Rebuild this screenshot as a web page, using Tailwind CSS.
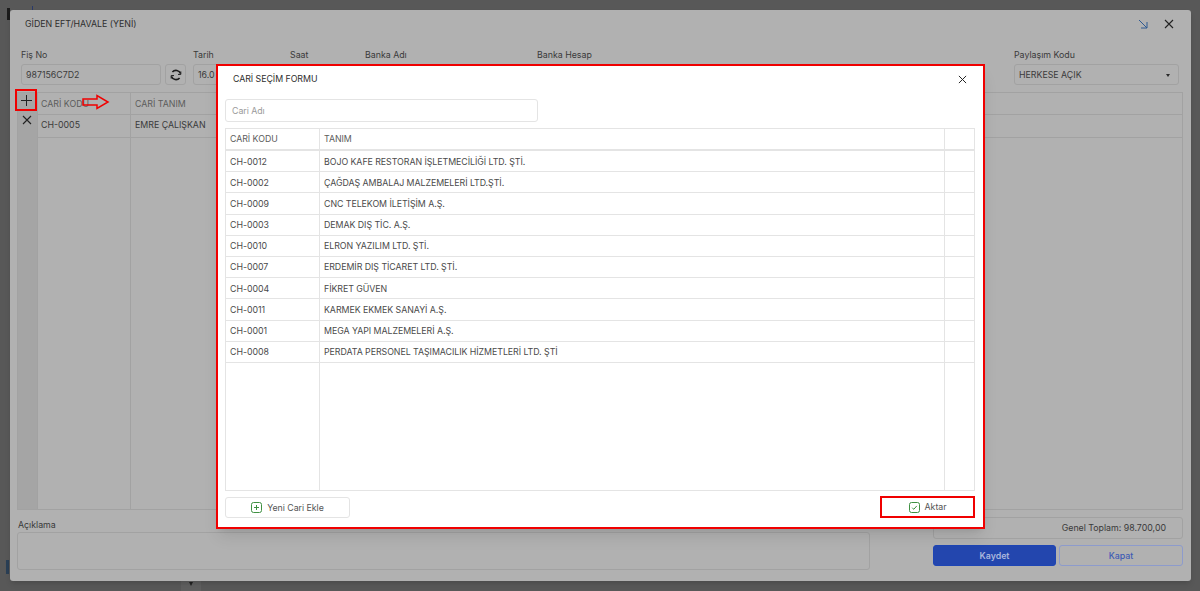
<!DOCTYPE html>
<html lang="tr">
<head>
    <meta charset="UTF-8">
    <title>Giden EFT/Havale</title>
    <script src="https://cdn.jsdelivr.net/npm/@tailwindcss/browser@4"></script>
</head>
<body class="bg-[#585858] font-['Inter',sans-serif] overflow-hidden">
    <div class="relative w-[1200px] h-[591px] p-[10px]">
        <!-- page behind the overlay -->
        <div class="absolute left-[7px] top-[8px] w-[3px] h-[12px] bg-[#1c1c1c]"></div>
        <div class="absolute left-[32px] top-[6px] w-[1px] h-[4px] bg-[#2a3a6a]"></div>
        <div class="absolute left-[6px] top-[560px] w-[3px] h-[14px] bg-[#2a3f55]"></div>
        <div class="absolute left-[181px] top-[581px] w-[20px] h-[10px] bg-[#5f5f5f] flex justify-center">
            <span class="mt-[1px] w-0 h-0 border-x-[2.5px] border-x-transparent border-t-[4px] border-t-[#222]"></span>
        </div>

        <!-- Giden EFT window -->
        <div class="relative w-[1181px] h-[571px] bg-[#b1b1b1] rounded-[3px] shadow-md flex flex-col text-[#3a3a3a]">
            <div class="flex items-center justify-between h-[28px] pl-[15px] pr-[17px]">
                <span class="text-[8.8px] text-[#2e2e2e]">GİDEN EFT/HAVALE (YENİ)</span>
                <div class="flex items-center gap-[16px]">
                    <svg class="w-[10px] h-[10px]" viewBox="0 0 10 10" fill="none" stroke="#2f5a92" stroke-width="1"><path d="M1 1l8 8M9 3v6H3"/></svg>
                    <svg class="w-[10px] h-[10px]" viewBox="0 0 10 10" fill="none" stroke="#222" stroke-width="1.1"><path d="M1 1l8 8M9 1l-8 8"/></svg>
                </div>
            </div>

            <!-- form row -->
            <div class="flex pl-[11px] mt-[10px] text-[8.8px]">
                <div class="w-[140px]">
                    <div class="h-[16px] text-[#3c3c3c]">Fiş No</div>
                    <div class="h-[21px] border border-[#a2a2a2] rounded-[3px] flex items-center pl-[4px] pt-[1px] text-[#3c3c3c]">987156C7D2</div>
                </div>
                <div class="ml-[4px] w-[21px] mt-[16px] h-[21px] border border-[#a2a2a2] rounded-[3px] flex items-center justify-center">
                    <svg class="w-[12px] h-[12px]" viewBox="0 0 12 12" fill="none" stroke="#1c1c1c" stroke-width="1.6"><path d="M10.500 4.500A4.800 4.800 0 0 0 2.400 3M1.500 7.500A4.800 4.800 0 0 0 9.600 9"/><path d="M10.800 2.400v3H8M1.200 9.600v-3H4" stroke-width="1"/></svg>
                </div>
                <div class="ml-[7px] w-[97px]">
                    <div class="h-[16px]">Tarih</div>
                    <div class="h-[21px] border border-[#a2a2a2] rounded-[3px] flex items-center pl-[4px] pt-[1px]">16.0</div>
                </div>
                <div class="w-[75px]"><div class="h-[16px]">Saat</div></div>
                <div class="w-[172px]"><div class="h-[16px]">Banka Adı</div></div>
                <div class="w-[477px]"><div class="h-[16px]">Banka Hesap</div></div>
                <div class="w-[165px]">
                    <div class="h-[16px]">Paylaşım Kodu</div>
                    <div class="h-[21px] border border-[#a2a2a2] rounded-[3px] flex items-center justify-between pl-[4px] pr-[8px] pt-[1px]">
                        HERKESE AÇIK
                        <span class="w-0 h-0 border-x-[2.5px] border-x-transparent border-t-[3px] border-t-[#2a2a2a]"></span>
                    </div>
                </div>
            </div>

            <!-- grid -->
            <div class="ml-[7px] mt-[7px] w-[1166px] h-[418px] border border-[#a2a2a2] flex text-[8.8px]">
                <div class="w-[19px] bg-[#a5a5a5] flex flex-col items-center pr-[1px]">
                    <div class="h-[21px]"></div>
                    <svg class="mt-[1px] w-[10px] h-[10px]" viewBox="0 0 10 10" fill="none" stroke="#222" stroke-width="1.1"><path d="M1 1l8 8M9 1l-8 8"/></svg>
                </div>
                <div class="flex-1 flex flex-col">
                    <div class="flex h-[22px] border-b border-[#a2a2a2] text-[#5c5c5c]">
                        <div class="w-[94px] pl-[3px] flex items-center border-x border-[#a2a2a2]">CARİ KODU</div>
                        <div class="flex-1 pl-[4px] flex items-center">CARİ TANIM</div>
                    </div>
                    <div class="flex h-[23px] border-b border-[#a2a2a2]">
                        <div class="w-[94px] pl-[3px] pb-[2px] flex items-center border-x border-[#a2a2a2]">CH-0005</div>
                        <div class="flex-1 pl-[4px] pb-[2px] flex items-center">EMRE ÇALIŞKAN</div>
                    </div>
                    <div class="flex-1 flex">
                        <div class="w-[94px] border-x border-[#a2a2a2]"></div>
                    </div>
                </div>
            </div>

            <!-- footer -->
            <div class="flex px-[7px] mt-[7px] text-[8.8px]">
                <div class="w-[853px]">
                    <div class="h-[15px] flex items-center pl-[1px]">Açıklama</div>
                    <div class="h-[38px] border border-[#a2a2a2] rounded-[3px]"></div>
                </div>
                <div class="ml-[63px] w-[250px]">
                    <div class="h-[22px] border border-[#a2a2a2] rounded-[3px] flex items-center justify-end pr-[16px]">Genel Toplam: 98.700,00</div>
                    <div class="flex gap-[3px] mt-[6px] h-[21px] text-[#2d4fb0]">
                        <div class="w-[123px] rounded-[3px] bg-[#2346ae] border border-[#1d45b5] text-[#a9b6dc] font-semibold flex items-center justify-center">Kaydet</div>
                        <div class="w-[124px] rounded-[3px] border border-[#8d9bcc] font-medium text-[#3d5bb5] flex items-center justify-center">Kapat</div>
                    </div>
                </div>
            </div>

            <!-- annotations on the underlying window -->
            <div class="absolute left-[5px] top-[79px] w-[22px] h-[22px] border-2 border-[#f00000] flex items-center justify-center">
                <svg class="w-[11px] h-[11px]" viewBox="0 0 11 11" fill="none" stroke="#222" stroke-width="1"><path d="M5.500 0v11M0 5.500h11"/></svg>
            </div>
            <svg class="absolute left-[72px] top-[84px] w-[28px] h-[16px]" viewBox="0 0 28 16" fill="none" stroke="#f00000" stroke-width="1.500"><path d="M1 5h14V1.500L26 8 15 14.500V11H1z"/></svg>
        </div>

        <!-- Cari secim modal -->
        <div class="absolute left-[216px] top-[64px] w-[769px] h-[465px] bg-white border-2 border-[#f00000] flex flex-col px-[7px] text-[8.8px] tracking-[-0.04px] text-[#4a4a4a] shadow-lg">
            <div class="flex items-center justify-between h-[26px] pl-[8px] pr-[9px]">
                <span class="text-[#2e2e2e]">CARİ SEÇİM FORMU</span>
                <svg class="w-[9px] h-[9px]" viewBox="0 0 10 10" fill="none" stroke="#222" stroke-width="1.1"><path d="M1 1l8 8M9 1l-8 8"/></svg>
            </div>
            <div class="mt-[7px] w-[313px] h-[23px] border border-[#e4e4e4] rounded-[3px] flex items-center pl-[6px] text-[#9a9a9a]">Cari Adı</div>
            <div class="mt-[6px] w-[750px] h-[363px] border border-[#e4e4e4] flex flex-col">
                <div class="flex h-[22px] border-b-2 border-[#e4e4e4] text-[#5c5c5c] shrink-0">
                    <div class="w-[94px] pl-[4px] flex items-center border-r border-[#e4e4e4]">CARİ KODU</div>
                    <div class="w-[625px] pl-[4px] flex items-center border-r border-[#e4e4e4]">TANIM</div>
                </div>
                <div class="flex h-[21.2px] border-b border-[#e4e4e4]"><div class="w-[94px] pl-[4px] flex items-center border-r border-[#e4e4e4]">CH-0012</div><div class="w-[625px] pl-[4px] flex items-center border-r border-[#e4e4e4]">BOJO KAFE RESTORAN İŞLETMECİLİĞİ LTD. ŞTİ.</div></div>
                <div class="flex h-[21.2px] border-b border-[#e4e4e4]"><div class="w-[94px] pl-[4px] flex items-center border-r border-[#e4e4e4]">CH-0002</div><div class="w-[625px] pl-[4px] flex items-center border-r border-[#e4e4e4]">ÇAĞDAŞ AMBALAJ MALZEMELERİ LTD.ŞTİ.</div></div>
                <div class="flex h-[21.2px] border-b border-[#e4e4e4]"><div class="w-[94px] pl-[4px] flex items-center border-r border-[#e4e4e4]">CH-0009</div><div class="w-[625px] pl-[4px] flex items-center border-r border-[#e4e4e4]">CNC TELEKOM İLETİŞİM A.Ş.</div></div>
                <div class="flex h-[21.2px] border-b border-[#e4e4e4]"><div class="w-[94px] pl-[4px] flex items-center border-r border-[#e4e4e4]">CH-0003</div><div class="w-[625px] pl-[4px] flex items-center border-r border-[#e4e4e4]">DEMAK DIŞ TİC. A.Ş.</div></div>
                <div class="flex h-[21.2px] border-b border-[#e4e4e4]"><div class="w-[94px] pl-[4px] flex items-center border-r border-[#e4e4e4]">CH-0010</div><div class="w-[625px] pl-[4px] flex items-center border-r border-[#e4e4e4]">ELRON YAZILIM LTD. ŞTİ.</div></div>
                <div class="flex h-[21.2px] border-b border-[#e4e4e4]"><div class="w-[94px] pl-[4px] flex items-center border-r border-[#e4e4e4]">CH-0007</div><div class="w-[625px] pl-[4px] flex items-center border-r border-[#e4e4e4]">ERDEMİR DIŞ TİCARET LTD. ŞTİ.</div></div>
                <div class="flex h-[21.2px] border-b border-[#e4e4e4]"><div class="w-[94px] pl-[4px] flex items-center border-r border-[#e4e4e4]">CH-0004</div><div class="w-[625px] pl-[4px] flex items-center border-r border-[#e4e4e4]">FİKRET GÜVEN</div></div>
                <div class="flex h-[21.2px] border-b border-[#e4e4e4]"><div class="w-[94px] pl-[4px] flex items-center border-r border-[#e4e4e4]">CH-0011</div><div class="w-[625px] pl-[4px] flex items-center border-r border-[#e4e4e4]">KARMEK EKMEK SANAYİ A.Ş.</div></div>
                <div class="flex h-[21.2px] border-b border-[#e4e4e4]"><div class="w-[94px] pl-[4px] flex items-center border-r border-[#e4e4e4]">CH-0001</div><div class="w-[625px] pl-[4px] flex items-center border-r border-[#e4e4e4]">MEGA YAPI MALZEMELERİ A.Ş.</div></div>
                <div class="flex h-[21.2px] border-b border-[#e4e4e4]"><div class="w-[94px] pl-[4px] flex items-center border-r border-[#e4e4e4]">CH-0008</div><div class="w-[625px] pl-[4px] flex items-center border-r border-[#e4e4e4]">PERDATA PERSONEL TAŞIMACILIK HİZMETLERİ LTD. ŞTİ</div></div>
                <div class="flex flex-1"><div class="w-[94px] border-r border-[#e4e4e4]"></div><div class="w-[625px] border-r border-[#e4e4e4]"></div></div>
            </div>
            <div class="mt-[5px] w-[750px] flex justify-between items-start">
                <div class="mt-[1px] w-[125px] h-[21px] border border-[#e4e4e4] rounded-[3px] flex items-center justify-center gap-[5px] text-[#555]">
                    <svg class="w-[11px] h-[11px]" viewBox="0 0 11 11" fill="none" stroke="#3f9142"><rect x=".5" y=".5" width="10" height="10" rx="2"/><path d="M5.500 3v5M3 5.500h5"/></svg>
                    Yeni Cari Ekle
                </div>
                <div class="w-[95px] h-[22px] border-2 border-[#f00000] flex items-center justify-center gap-[5px] text-[#555]">
                    <svg class="w-[11px] h-[11px]" viewBox="0 0 11 11" fill="none" stroke="#3f9142"><rect x=".5" y=".5" width="10" height="10" rx="2"/><path d="M3.200 5.700l1.600 1.600 3-3.400"/></svg>
                    Aktar
                </div>
            </div>
        </div>
    </div>
</body>
</html>
